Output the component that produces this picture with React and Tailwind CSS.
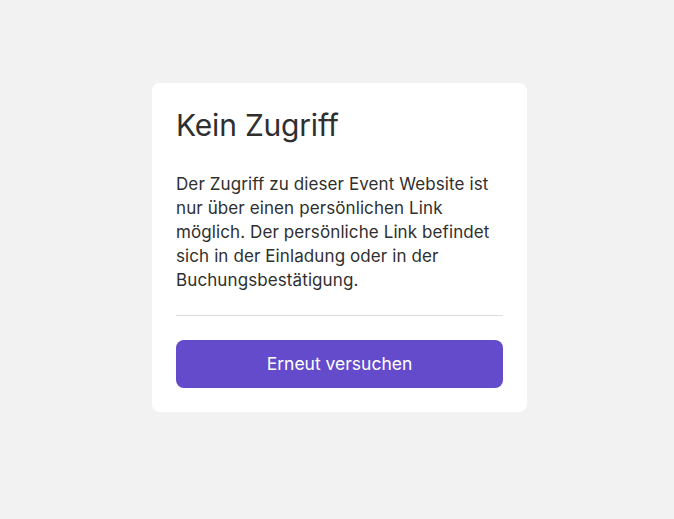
import React from 'react';

export default function App() {
  return (
    <div
      className="min-h-screen w-full bg-[#f2f2f2] flex justify-center items-start pt-[83px] pl-[5px]"
      style={{ fontFamily: '"Inter", "Noto Sans", sans-serif' }}
    >
      <div className="w-[375px] bg-white rounded-lg p-6 text-[#2f2f2f]">
        <h1 className="text-[30px] leading-9 font-normal tracking-[-0.2px]">Kein Zugriff</h1>
        <p className="mt-[29px] text-[17px] leading-6 tracking-[0.1px]">
          Der Zugriff zu dieser Event Website ist nur über einen persönlichen Link möglich. Der
          persönliche Link befindet sich in der Einladung oder in der Buchungsbestätigung.
        </p>
        <div className="mt-[23px] h-px bg-[#dddddd]" />
        <button className="mt-6 w-full h-12 rounded-lg bg-[#644bcb] text-white text-[17.5px] tracking-[0px]">
          Erneut versuchen
        </button>
      </div>
    </div>
  );
}
